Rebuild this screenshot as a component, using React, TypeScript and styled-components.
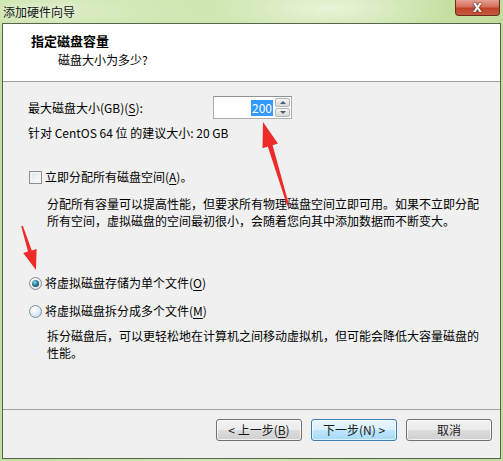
import React from 'react';
import styled, { createGlobalStyle } from 'styled-components';

const GlobalStyle = createGlobalStyle`
    html, body {
        margin: 0;
        padding: 0;
        background: #ffffff;
    }
    body {
        font-family: "Noto Sans CJK SC", "Microsoft YaHei", sans-serif;
        font-size: 12px;
        color: #000000;
    }
`;

const StyledWindow = styled.div`
    position: relative;
    width: 503px;
    height: 461px;
    display: flex;
    flex-direction: column;
    box-sizing: border-box;
    background:
        radial-gradient(ellipse 120px 30px at 330px 8px, rgba(236, 246, 222, 0.9), rgba(236, 246, 222, 0)),
        radial-gradient(ellipse 140px 30px at 60px 10px, rgba(226, 241, 206, 0.8), rgba(226, 241, 206, 0)),
        linear-gradient(90deg, #c3df9f 0%, #cfe7b3 40%, #c8e3a7 70%, #c2de9d 100%);
`;

const StyledTitleBar = styled.div`
    height: 23px;
    flex: none;
    display: flex;
    justify-content: space-between;
    align-items: flex-start;
`;

const StyledTitleText = styled.div`
    padding: 3px 0 0 3px;
    line-height: 18px;
    font-size: 12px;
    color: #141414;
    text-shadow: 0 0 6px rgba(255, 255, 255, 0.9);
`;

const StyledCloseButton = styled.div`
    margin-right: 3px;
    width: 45px;
    height: 16px;
    box-sizing: border-box;
    border: 1px solid #6a2a20;
    border-top: none;
    border-radius: 0 0 4px 4px;
    background: linear-gradient(180deg, #e6a08e 0%, #d4705b 45%, #c0412b 55%, #c75a3f 100%);
    display: flex;
    align-items: center;
    justify-content: center;
    color: #ffffff;
    font-family: "DejaVu Sans", sans-serif;
    font-weight: bold;
    font-size: 12px;
    line-height: 14px;
    text-shadow: 0 0 1px #3a1008, 0 0 2px #3a1008;
`;

const StyledClient = styled.div`
    flex: 1;
    margin: 0 2px 2px 2px;
    border: 1px solid #56654a;
    display: flex;
    flex-direction: column;
    background: #f0f0f0;
`;

const StyledHeader = styled.div`
    height: 57px;
    flex: none;
    background: #ffffff;
    border-bottom: 1px solid #a0a0a0;
    box-sizing: content-box;
    padding-left: 28px;
`;

const StyledHeaderTitle = styled.div`
    margin-top: 8px;
    font-size: 13px;
    font-weight: bold;
    line-height: 18px;
`;

const StyledHeaderSubtitle = styled.div`
    margin-top: 2px;
    padding-left: 27px;
    line-height: 16px;
`;

const StyledBody = styled.div`
    flex: 1;
    padding: 14px 0 0 25px;
    display: flex;
    flex-direction: column;
`;

const StyledSizeRow = styled.div`
    display: grid;
    grid-template-columns: 185px 79px;
    align-items: center;
    height: 23px;
`;

const StyledText = styled.div<{ $top?: number }>`
    margin-top: ${(props) => props.$top || 0}px;
    line-height: 16px;
    white-space: nowrap;
`;

const StyledKey = styled.span`
    text-decoration: underline;
    text-underline-offset: 2px;
`;

const StyledSpinBox = styled.div`
    height: 23px;
    box-sizing: border-box;
    border: 1px solid #abadb3;
    border-top-color: #8e9196;
    background: #ffffff;
    display: flex;
    align-items: stretch;
`;

const StyledSpinInput = styled.div`
    flex: 1;
    display: flex;
    justify-content: flex-end;
    align-items: center;
    padding-right: 2px;
`;

const StyledSelection = styled.span`
    background: #3399ff;
    color: #ffffff;
    line-height: 16px;
    padding: 0 1px;
`;

const StyledSpinButtons = styled.div`
    width: 15px;
    display: flex;
    flex-direction: column;
    gap: 1px;
    padding: 1px 1px 1px 0;
`;

const StyledSpinButton = styled.div<{ $down?: boolean }>`
    flex: 1;
    border: 1px solid #b4b4b4;
    border-radius: 2px;
    background: linear-gradient(180deg, #f6f6f6 0%, #e6e6e6 50%, #d9d9d9 100%);
    display: flex;
    align-items: center;
    justify-content: center;

    &::after {
        content: '';
        width: 0;
        height: 0;
        border-left: 3px solid transparent;
        border-right: 3px solid transparent;
        ${(props) => props.$down
            ? 'border-top: 3px solid #4a5b7c;'
            : 'border-bottom: 3px solid #4a5b7c;'}
    }
`;

const StyledOptionRow = styled.div<{ $top: number }>`
    margin-top: ${(props) => props.$top}px;
    display: flex;
    align-items: center;
    gap: 3px;
    line-height: 16px;
    padding-left: 1px;
`;

const StyledCheckbox = styled.span`
    width: 13px;
    height: 13px;
    box-sizing: border-box;
    border: 1px solid #8e8f8f;
    background: linear-gradient(135deg, #dcdcdc 0%, #f4f4f4 60%, #ffffff 100%);
    box-shadow: inset 0 0 0 2px #f2f2f2;
    flex: none;
`;

const StyledRadio = styled.span<{ $checked?: boolean }>`
    width: 13px;
    height: 13px;
    box-sizing: border-box;
    border-radius: 50%;
    border: 1px solid #8b8b8b;
    flex: none;
    display: flex;
    align-items: center;
    justify-content: center;
    background: ${(props) => props.$checked
        ? 'radial-gradient(circle at 40% 35%, #ffffff 0%, #e4e4e4 70%, #c8c8c8 100%)'
        : 'radial-gradient(circle at 40% 35%, #ffffff 0%, #d5e9f6 60%, #a9cfe6 100%)'};

    &::after {
        content: '';
        display: ${(props) => (props.$checked ? 'block' : 'none')};
        width: 7px;
        height: 7px;
        border-radius: 50%;
        background: radial-gradient(circle at 40% 35%, #8ee0f0 0%, #2a7c9a 45%, #0d3b52 100%);
    }
`;

const StyledDescription = styled.div<{ $top: number }>`
    margin-top: ${(props) => props.$top}px;
    margin-left: 19px;
    width: 436px;
    line-height: 17px;
`;

const StyledFooter = styled.div`
    height: 39px;
    flex: none;
    border-top: 1px solid #a0a0a0;
    display: flex;
    justify-content: flex-end;
    align-items: flex-start;
    gap: 9px;
    padding: 9px 8px 0 0;
    box-sizing: content-box;
`;

const StyledButton = styled.div<{ $focused?: boolean }>`
    width: 86px;
    height: 22px;
    box-sizing: border-box;
    border-radius: 3px;
    border: 1px solid ${(props) => (props.$focused ? '#3c7fb1' : '#707070')};
    background: ${(props) => props.$focused
        ? 'linear-gradient(180deg, #eaf6fd 0%, #d9f0fc 50%, #bee6fd 51%, #a7d9f5 100%)'
        : 'linear-gradient(180deg, #f2f2f2 0%, #ebebeb 50%, #dddddd 51%, #cfcfcf 100%)'};
    box-shadow: inset 0 0 0 1px ${(props) => (props.$focused ? 'rgba(255,255,255,0.6)' : 'rgba(255,255,255,0.7)')};
    display: flex;
    align-items: center;
    justify-content: center;
    line-height: 16px;
    color: #1a1a1a;
`;

const StyledArrows = styled.svg`
    position: absolute;
    left: 0;
    top: 0;
    pointer-events: none;
`;

const App = () => {
    return (
        <>
            <GlobalStyle />
            <StyledWindow>
                <StyledTitleBar>
                    <StyledTitleText>添加硬件向导</StyledTitleText>
                    <StyledCloseButton>X</StyledCloseButton>
                </StyledTitleBar>

                <StyledClient>
                    <StyledHeader>
                        <StyledHeaderTitle>指定磁盘容量</StyledHeaderTitle>
                        <StyledHeaderSubtitle>磁盘大小为多少?</StyledHeaderSubtitle>
                    </StyledHeader>

                    <StyledBody>
                        <StyledSizeRow>
                            <StyledText>
                                最大磁盘大小(GB)(<StyledKey>S</StyledKey>):
                            </StyledText>
                            <StyledSpinBox>
                                <StyledSpinInput>
                                    <StyledSelection>200</StyledSelection>
                                </StyledSpinInput>
                                <StyledSpinButtons>
                                    <StyledSpinButton />
                                    <StyledSpinButton $down />
                                </StyledSpinButtons>
                            </StyledSpinBox>
                        </StyledSizeRow>

                        <StyledText $top={6}>针对 CentOS 64 位 的建议大小: 20 GB</StyledText>

                        <StyledOptionRow $top={28}>
                            <StyledCheckbox />
                            <span>
                                立即分配所有磁盘空间(<StyledKey>A</StyledKey>)。
                            </span>
                        </StyledOptionRow>
                        <StyledDescription $top={10}>
                            分配所有容量可以提高性能，但要求所有物理磁盘空间立即可用。如果不立即分配所有空间，虚拟磁盘的空间最初很小，会随着您向其中添加数据而不断变大。
                        </StyledDescription>

                        <StyledOptionRow $top={46}>
                            <StyledRadio $checked />
                            <span>
                                将虚拟磁盘存储为单个文件(<StyledKey>O</StyledKey>)
                            </span>
                        </StyledOptionRow>
                        <StyledOptionRow $top={12}>
                            <StyledRadio />
                            <span>
                                将虚拟磁盘拆分成多个文件(<StyledKey>M</StyledKey>)
                            </span>
                        </StyledOptionRow>
                        <StyledDescription $top={8}>
                            拆分磁盘后，可以更轻松地在计算机之间移动虚拟机，但可能会降低大容量磁盘的性能。
                        </StyledDescription>
                    </StyledBody>

                    <StyledFooter>
                        <StyledButton>
                            &lt; 上一步(<StyledKey>B</StyledKey>)
                        </StyledButton>
                        <StyledButton $focused>下一步(N) &gt;</StyledButton>
                        <StyledButton>取消</StyledButton>
                    </StyledFooter>
                </StyledClient>

                <StyledArrows width="503" height="461" viewBox="0 0 503 461">
                    <polygon
                        fill="#ee2a2a"
                        points="263,122 277.9,143.6 272.6,145.2 289,204.7 287,205.3 267.8,146.6 262.5,148.2"
                    />
                    <polygon
                        fill="#ee2a2a"
                        points="36,270 23.2,253.1 28,251.6 21.2,226.2 22.8,225.8 31.8,250.4 36.6,248.9"
                    />
                </StyledArrows>
            </StyledWindow>
        </>
    );
};

export default App;
